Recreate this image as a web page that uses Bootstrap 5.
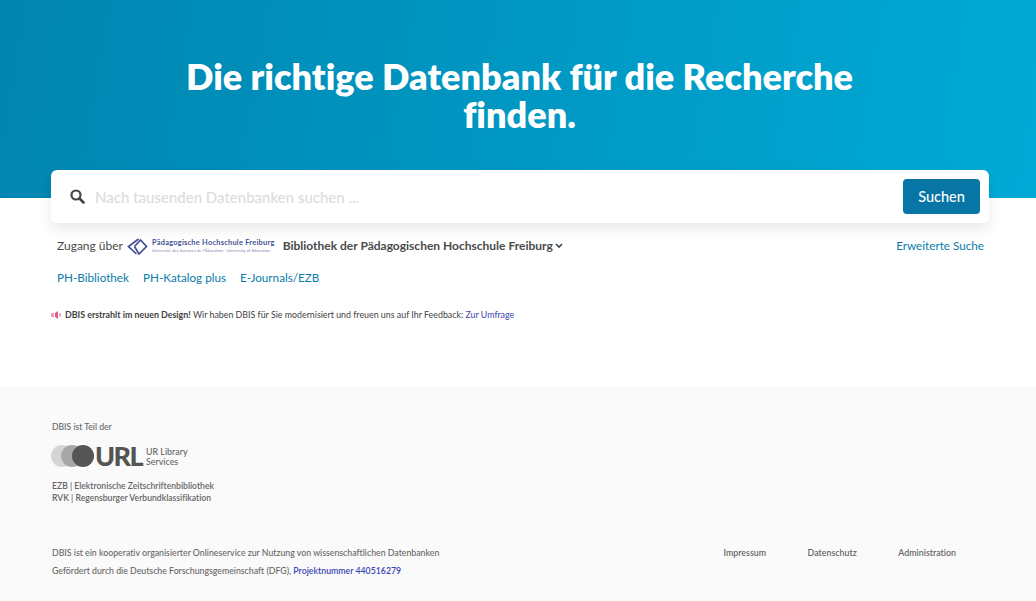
<!DOCTYPE html>
<html lang="de">
<head>
<meta charset="utf-8">
<title>DBIS</title>
<link href="https://cdn.jsdelivr.net/npm/bootstrap@5.3.0/dist/css/bootstrap.min.css" rel="stylesheet">
<style>
html,body{height:601px;overflow:hidden}
body{font-family:Lato,"Noto Sans",sans-serif;color:#4a4a4a;background:#fff;font-variant-ligatures:none}
a{text-decoration:none}
.hero-band{height:198px;background:linear-gradient(100deg,#0085b0 0%,#00aad6 100%);padding:57px 0 0 3px}
.hero-title{width:700px;font-size:36.05px;line-height:38px;font-weight:800;color:#fff;text-align:center}
.page-wrap{padding:0 47px 0 51px}
.search-box{margin-top:-28px;height:53px;background:#fff;border-radius:6px;box-shadow:0 6px 14px rgba(0,0,0,.09);padding:0 9px 0 19px}
.search-ph{color:#dcdcdc;font-size:15px;font-weight:500;margin-left:10px;padding-top:1px}
.go-btn{background:#0775a5;color:#fff;border:0;border-radius:4px;width:77px;height:35px;font-size:14.5px;font-weight:500;padding:0}
.access-row{height:46px;padding:0 5px 0 6px;font-size:12px}
.lib-name{font-weight:700;margin-left:8px;font-size:12px}
.chev-mark{margin-left:2px}
.lnk{color:#0a7cab;font-size:11.7px}
.link-line{padding-left:6px;gap:14px;height:18px}
.notice{font-size:8.85px;margin-top:21px;height:14px;color:#3f3f3f}
.notice a{color:#3b45b5}
.ph-logo{line-height:1;margin:0 0 0 4px}
.ph-name{color:#3f4f95;font-size:7.4px;font-weight:700;letter-spacing:.26px;white-space:nowrap;display:block}
.ph-sub{color:#7c85ad;font-size:4.1px;white-space:nowrap;display:block;margin-top:2px;letter-spacing:.08px}
.foot-area{position:absolute;left:0;right:0;top:387px;height:214px;background:#fafafa;padding:34px 80px 0 52px;font-size:8.6px;color:#666;font-weight:500}
.url-mark{margin-top:9px;height:26px;margin-left:-1px}
.url-big{font-size:27px;font-weight:900;color:#555;line-height:26px;margin-left:1px;letter-spacing:-1.6px}
.url-small{font-size:8.9px;line-height:9.5px;color:#666;margin-left:4px;margin-top:2px}
.foot-list{margin-top:11px;line-height:12px;font-weight:600}
.foot-low{margin-top:42px;font-size:8.76px}
.foot-low a{color:#3b45b5;font-weight:600}
.foot-line2{margin-top:5px}
.foot-nav{gap:41.5px;font-weight:600;font-size:8.85px}
.foot-nav a{color:#666}
</style>
</head>
<body>
<header class="hero-band"><h1 class="hero-title mx-auto mb-0">Die richtige Datenbank für die Recherche finden.</h1></header>
<main class="page-wrap">
<div class="search-box d-flex align-items-center position-relative">
<svg width="15" height="15" viewBox="0 0 15 15" aria-hidden="true"><circle cx="6" cy="6" r="4.5" fill="none" stroke="#444" stroke-width="2.2"/><path d="M9.5 9.5l4 4" stroke="#444" stroke-width="2.6" stroke-linecap="round"/></svg>
<span class="search-ph flex-grow-1">Nach tausenden Datenbanken suchen ...</span>
<button class="go-btn" type="button">Suchen</button>
</div>
<div class="access-row d-flex align-items-center">
<span>Zugang über</span>
<span class="ph-logo d-flex align-items-center">
<svg class="me-1" width="21" height="17" viewBox="0 0 21 17" aria-hidden="true"><path d="M11.5 1L1.5 8.5l8 7.5M7.5 8.5l6-6.5 6 6.5-7.5 7.5-4.5-7.5" fill="none" stroke="#3f4f95" stroke-width="1.7"/></svg>
<span><span class="ph-name">Pädagogische Hochschule Freiburg</span><span class="ph-sub">Université des Sciences de l'Éducation · University of Education</span></span>
</span>
<span class="lib-name">Bibliothek der Pädagogischen Hochschule Freiburg</span>
<svg class="chev-mark" width="8" height="6" viewBox="0 0 8 6" aria-hidden="true"><path d="M1 1l3 3 3-3" fill="none" stroke="#444" stroke-width="1.6"/></svg>
<a class="lnk ms-auto" href="#">Erweiterte Suche</a>
</div>
<nav class="link-line d-flex align-items-center"><a class="lnk" href="#">PH-Bibliothek</a><a class="lnk" href="#">PH-Katalog plus</a><a class="lnk" href="#">E-Journals/EZB</a></nav>
<p class="notice d-flex align-items-center mb-0">
<svg class="me-1" width="10" height="8" viewBox="0 0 10 8" aria-hidden="true"><path d="M0 2h3v4H0z" fill="#f0a0bd"/><path d="M4 2l3-2v8L4 6z" fill="#e8578f"/><path d="M8 2h2v4H8z" fill="#f3b0c8"/></svg>
<span><b>DBIS erstrahlt im neuen Design!</b> Wir haben DBIS für Sie modernisiert und freuen uns auf Ihr Feedback: <a href="#">Zur Umfrage</a></span>
</p>
</main>
<footer class="foot-area">
<div>DBIS ist Teil der</div>
<div class="url-mark d-flex align-items-center">
<svg width="43" height="22" viewBox="0 0 43 22" aria-hidden="true"><circle cx="11" cy="11" r="11" fill="#d5d5d5"/><circle cx="21" cy="11" r="11" fill="#a8a8a8"/><circle cx="32" cy="11" r="11" fill="#555"/></svg>
<span class="url-big">URL</span>
<span class="url-small">UR Library<br>Services</span>
</div>
<div class="foot-list">EZB | Elektronische Zeitschriftenbibliothek<br>RVK | Regensburger Verbundklassifikation</div>
<div class="foot-low d-flex justify-content-between">
<div>
<div>DBIS ist ein kooperativ organisierter Onlineservice zur Nutzung von wissenschaftlichen Datenbanken</div>
<div class="foot-line2">Gefördert durch die Deutsche Forschungsgemeinschaft (DFG), <a href="#">Projektnummer 440516279</a></div>
</div>
<nav class="foot-nav d-flex align-items-start"><a href="#">Impressum</a><a href="#">Datenschutz</a><a href="#">Administration</a></nav>
</div>
</footer>
</body>
</html>
